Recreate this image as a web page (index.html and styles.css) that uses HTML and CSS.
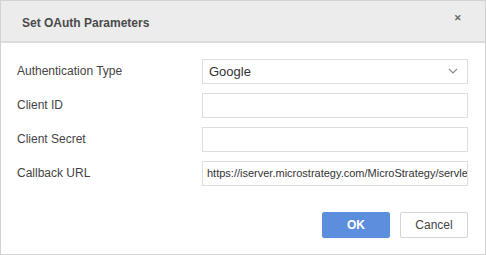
FILE: index.html
```html
<!DOCTYPE html>
<html lang="en">

<head>
  <meta charset="UTF-8">
  <title>Set OAuth Parameters</title>
  <link rel="stylesheet" href="styles.css">
</head>

<body>
  <div class="dialog">
    <div class="dialog__header">
      <h3 class="dialog__title">Set OAuth Parameters</h3>
      <span class="dialog__close">&#x2715;</span>
    </div>

    <form class="dialog__body">
      <div class="field">
        <label class="field__label">Authentication Type</label>
        <div class="field__input field__select">
          <span>Google</span>
          <svg class="chevron" viewBox="0 0 10 6">
            <path d="M1 1l4 4 4-4" fill="none" stroke="#888" stroke-width="1.1"></path>
          </svg>
        </div>
      </div>

      <div class="field">
        <label class="field__label">Client ID</label>
        <div class="field__input"></div>
      </div>

      <div class="field">
        <label class="field__label">Client Secret</label>
        <div class="field__input"></div>
      </div>

      <div class="field">
        <label class="field__label">Callback URL</label>
        <div class="field__input field__url">https://iserver.microstrategy.com/MicroStrategy/servlet/mstrWeb</div>
      </div>

      <div class="dialog__buttons">
        <span class="btn btn--primary">OK</span>
        <span class="btn">Cancel</span>
      </div>
    </form>
  </div>
</body>

</html>
```

FILE: styles.css
```css
* {
  box-sizing: border-box;
}

body {
  margin: 0;
  font-family: "Liberation Sans", Arial, sans-serif;
  font-size: 12px;
  color: #444;
  background: #fff;
}

.dialog {
  width: 486px;
  height: 255px;
  border: 1px solid #d2d2d2;
  display: flex;
  flex-direction: column;
}

.dialog__header {
  height: 42px;
  background: #ececec;
  border-bottom: 2px solid #dcdcdc;
  display: flex;
  align-items: flex-start;
  justify-content: space-between;
  padding: 15px 23px 0 21px;
}

.dialog__title {
  margin: 0;
  font-size: 12px;
  font-weight: 700;
  color: #4a4a4a;
}

.dialog__close {
  font-size: 9px;
  font-weight: 700;
  color: #666;
  line-height: 1;
  margin-top: -2px;
}

.dialog__body {
  display: flex;
  flex-direction: column;
  gap: 10px;
  padding: 16px 17px 0 16px;
}

.field {
  display: flex;
  align-items: center;
  height: 24px;
}

.field__label {
  width: 185px;
  color: #444;
}

.field__input {
  width: 266px;
  height: 25px;
  border: 1px solid #dedede;
  background: #fff;
  display: flex;
  align-items: center;
  padding: 0 6px;
  overflow: hidden;
  white-space: nowrap;
}

.field__select {
  justify-content: space-between;
  font-size: 13px;
  color: #333;
  padding-right: 9px;
}

.field__url {
  font-size: 11px;
  color: #333;
  padding-left: 4px;
}

.chevron {
  width: 10px;
  height: 6px;
}

.dialog__buttons {
  display: flex;
  justify-content: flex-end;
  gap: 10px;
  margin-top: 17px;
}

.btn {
  width: 68px;
  height: 26px;
  border: 1px solid #d4d4d4;
  border-radius: 2px;
  display: flex;
  align-items: center;
  justify-content: center;
  font-size: 12px;
  color: #444;
  background: #fff;
}

.btn--primary {
  background: #5b8fde;
  border-color: #5b8fde;
  color: #fff;
  font-weight: 700;
}
```
